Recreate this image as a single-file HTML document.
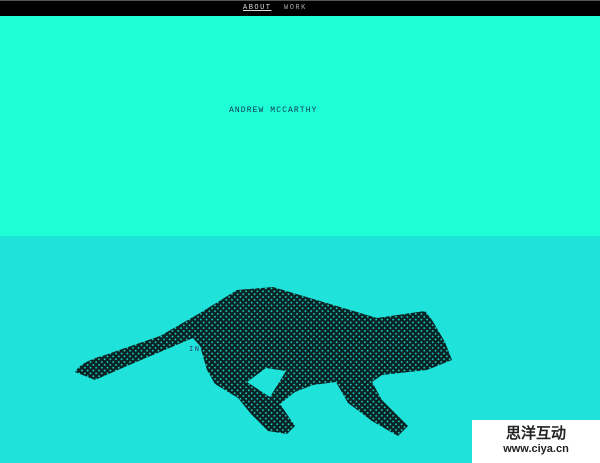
<!DOCTYPE html>
<html><head><meta charset="utf-8"><style>
html,body{margin:0;padding:0;width:600px;height:463px;overflow:hidden;font-family:"Liberation Mono",monospace}
.top{position:absolute;left:0;top:0;width:600px;height:16px;background:#000;border-top:1px solid #555;box-sizing:border-box}
.nav{position:absolute;top:3px;font-size:7px;letter-spacing:1.5px;color:#ccc}
.a{left:243px;text-decoration:underline;color:#ddd}
.w{left:284px;color:#aaa}
.hero{position:absolute;left:0;top:16px;width:600px;height:220px;background:#1effd6}
.name{position:absolute;left:229px;top:106px;font-size:8px;letter-spacing:1.1px;color:#135}
.low{position:absolute;left:0;top:236px;width:600px;height:227px;background:#1fe3db}
.int{position:absolute;left:189px;top:346px;font-size:7px;letter-spacing:1.5px;color:#336}
.wm{position:absolute;left:472px;top:420px;width:128px;height:43px;background:#fff;text-align:center;font-family:"Liberation Sans","WenQuanYi Zen Hei",sans-serif;font-weight:bold;color:#222}
</style></head><body>
<div class="top"><span class="nav a">ABOUT</span><span class="nav w">WORK</span></div>
<div class="hero"></div>
<div class="name">ANDREW MCCARTHY</div>
<div class="low"></div>
<div class="int">INTRO</div>
<svg style="position:absolute;left:0;top:0" width="600" height="463">
<defs><pattern id="p" width="4" height="4" patternUnits="userSpaceOnUse" patternTransform="rotate(45)"><rect width="4" height="4" fill="#0a2222"/><circle cx="0" cy="0" r="0.9" fill="#1fe3db"/><circle cx="4" cy="0" r="0.9" fill="#1fe3db"/><circle cx="0" cy="4" r="0.9" fill="#1fe3db"/><circle cx="4" cy="4" r="0.9" fill="#1fe3db"/></pattern></defs>
<path fill="url(#p)" fill-rule="evenodd" d="M75 372 Q80 362 105 355 L160 336 L200 313 L237 290 L273 287 L320 301 L377 318 L425 311 L432 320 L445 342 L452 360 L427 370 L382 375 L372 382 L382 400 L408 426 L398 436 L372 421 L348 403 L336 382 L313 385 L295 392 L280 404 L295 426 L287 434 L268 431 L251 414 L238 398 L215 384 L207 370 L200 346 L193 338 L160 352 L127 366 L95 380 Z M247 382 L266 368 L286 371 L270 397 Z"/>
</svg>
<div class="wm"><div style="font-size:15px;line-height:18px;margin-top:5px">思洋互动</div><div style="font-size:11px;line-height:12px">www.ciya.cn</div></div>
</body></html>
